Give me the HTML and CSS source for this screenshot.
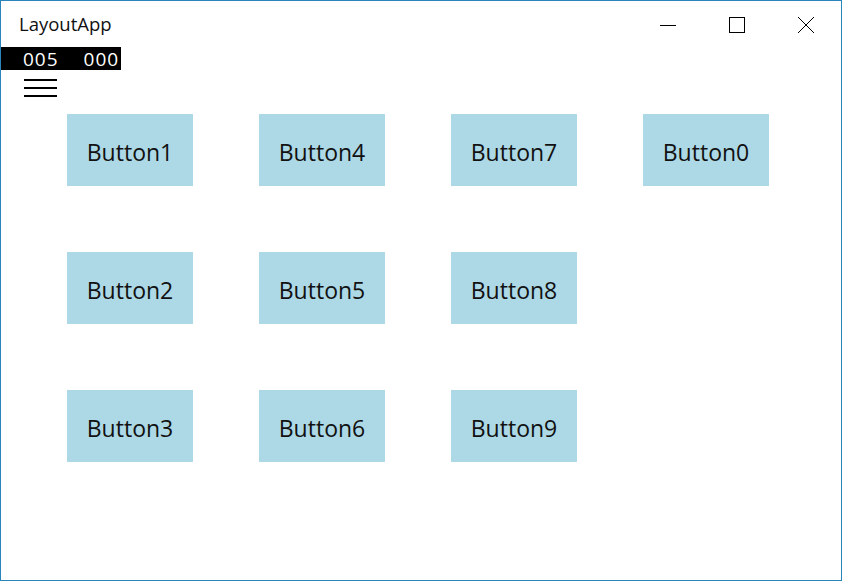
FILE: index.html
```html
<!DOCTYPE html>
<html lang="en">
<head>
    <meta charset="UTF-8">
    <title>LayoutApp</title>
    <link rel="stylesheet" href="styles.css">
</head>
<body>
    <div class="window">
        <div class="title-bar">
            <span class="title">LayoutApp</span>
            <div class="controls">
                <span class="ctl">
                    <svg width="16" height="16" viewBox="0 0 16 16"><path d="M0 8.5h16" stroke="#000" stroke-width="1"/></svg>
                </span>
                <span class="ctl">
                    <svg width="16" height="16" viewBox="0 0 16 16"><rect x="0.5" y="0.5" width="15" height="15" fill="none" stroke="#000" stroke-width="1"/></svg>
                </span>
                <span class="ctl">
                    <svg width="16" height="16" viewBox="0 0 16 16"><path d="M0 0L16 16M16 0L0 16" stroke="#000" stroke-width="1"/></svg>
                </span>
            </div>
        </div>
        <div class="counter">
            <span>005</span>
            <span>000</span>
        </div>
        <div class="menu">
            <span></span><span></span><span></span>
        </div>
        <div class="grid">
            <button class="btn">Button1</button>
            <button class="btn">Button4</button>
            <button class="btn">Button7</button>
            <button class="btn">Button0</button>
            <button class="btn">Button2</button>
            <button class="btn">Button5</button>
            <button class="btn">Button8</button>
            <div></div>
            <button class="btn">Button3</button>
            <button class="btn">Button6</button>
            <button class="btn">Button9</button>
        </div>
    </div>
</body>
</html>
```

FILE: styles.css
```css
body {
    margin: 0;
    font-family: "Open Sans", "Noto Sans", sans-serif;
    background-color: #fff;
}

.window {
    width: 842px;
    height: 581px;
    box-sizing: border-box;
    border: 1px solid #2b85bd;
    overflow: hidden;
}

.title-bar {
    height: 46px;
    display: flex;
    justify-content: space-between;
    align-items: flex-start;
}

.title {
    font-size: 18.5px;
    line-height: 24px;
    color: #111;
    margin: 11px 0 0 18px;
}

.controls {
    display: flex;
    gap: 53px;
    margin: 16px 27px 0 0;
}

.ctl {
    width: 16px;
    height: 16px;
    display: block;
}

.ctl svg {
    display: block;
}

.counter {
    width: 120px;
    height: 23px;
    background-color: #000;
    color: #fff;
    display: flex;
    gap: 25px;
    align-items: center;
    font-size: 19px;
    font-weight: 500;
    padding-left: 22px;
    box-sizing: border-box;
    letter-spacing: 1px;
}

.menu {
    width: 33px;
    margin: 9px 0 0 23px;
    display: flex;
    flex-direction: column;
    gap: 6px;
}

.menu span {
    height: 2px;
    background-color: #000;
}

.grid {
    display: grid;
    grid-template-columns: repeat(4, 126px);
    grid-auto-rows: 72px;
    column-gap: 66px;
    row-gap: 66px;
    margin: 17px 0 0 66px;
}

.btn {
    background-color: #add8e6;
    border: none;
    padding: 3px 0 0;
    font-family: "Open Sans", "Noto Sans", sans-serif;
    font-size: 23px;
    color: #111;
}
```
